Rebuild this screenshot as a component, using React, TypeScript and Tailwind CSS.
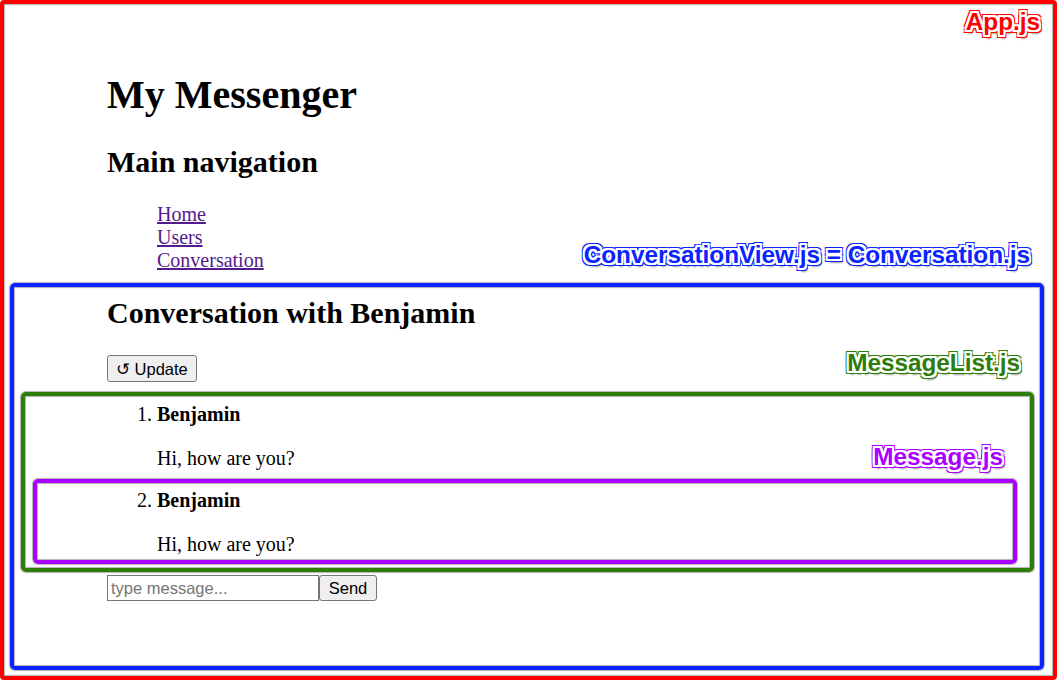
import React from "react";

const messages = [
  { id: 1, author: "Benjamin", text: "Hi, how are you?" },
  { id: 2, author: "Benjamin", text: "Hi, how are you?" },
];

export default function App() {
  return (
    <div className="relative w-[1057px] h-[680px] overflow-hidden bg-white text-black font-['Liberation_Serif',serif]">
      {/* the page itself */}
      <div className="flex flex-col items-start pl-[107px] pt-[72px]">
        <h1 className="text-[40px] leading-[46px] font-bold">My Messenger</h1>
        <h2 className="mt-[26px] text-[30px] leading-[35px] font-bold">Main navigation</h2>
        <ul className="mt-[24px] pl-[50px] text-[20px] leading-[23px]">
          <li><a href="#" className="text-[#551a8b] underline">Home</a></li>
          <li><a href="#" className="text-[#551a8b] underline">Users</a></li>
          <li><a href="#" className="text-[#551a8b] underline">Conversation</a></li>
        </ul>

        {/* ConversationView */}
        <h2 className="mt-[23px] text-[30px] leading-[35px] font-bold">Conversation with Benjamin</h2>
        <button className="mt-[25px] h-[27px] px-[8px] rounded-[3px] border border-[#767676] bg-[#efefef] font-['Liberation_Sans',Arial,sans-serif] text-[16.5px] leading-[20px]">
          ↺ Update
        </button>

        {/* MessageList */}
        <ol className="mt-[21px] pl-[50px] list-decimal text-[20px] leading-[23px]">
          {messages.map((m) => (
            <li key={m.id}>
              <strong className="font-bold">{m.author}</strong>
              <p className="mt-[21px] mb-[19px]">{m.text}</p>
            </li>
          ))}
        </ol>

        <form className="flex items-center" onSubmit={(e) => e.preventDefault()}>
          <input
            type="text"
            placeholder="type message..."
            className="w-[212px] h-[26px] px-[3px] border border-[#767676] font-['Liberation_Sans',Arial,sans-serif] text-[16.5px] placeholder:text-[#757575] outline-none"
          />
          <button className="w-[58px] h-[26px] rounded-[3px] border border-[#767676] bg-[#efefef] font-['Liberation_Sans',Arial,sans-serif] text-[16.5px] leading-[20px]">
            Send
          </button>
        </form>
      </div>

      {/* annotation frames */}
      <div className="pointer-events-none absolute inset-0 border-4 border-[#ff0000] rounded-[4px] shadow-[inset_0_0_1px_1px_rgba(0,0,0,0.3)]" />
      <div className="pointer-events-none absolute left-[10px] top-[283px] w-[1034px] h-[387px] border-4 border-[#0a24ff] rounded-[5px] shadow-[0_0_1px_1px_rgba(0,0,0,0.3),inset_0_0_1px_1px_rgba(0,0,0,0.3)]" />
      <div className="pointer-events-none absolute left-[21px] top-[392px] w-[1013px] h-[180px] border-4 border-[#2d7d0b] rounded-[5px] shadow-[0_0_1px_1px_rgba(0,0,0,0.3),inset_0_0_1px_1px_rgba(0,0,0,0.3)]" />
      <div className="pointer-events-none absolute left-[33px] top-[479px] w-[984px] h-[85px] border-4 border-[#aa00ff] rounded-[5px] shadow-[0_0_1px_1px_rgba(0,0,0,0.3),inset_0_0_1px_1px_rgba(0,0,0,0.3)]" />

      {/* annotation labels */}
      <span className="pointer-events-none absolute right-[17px] top-[8px] font-['Liberation_Sans',Arial,sans-serif] font-bold text-[24.3px] leading-[28px] text-[#ff0000] [text-shadow:2px_0_0_#fff,-2px_0_0_#fff,0_2px_0_#fff,0_-2px_0_#fff,2px_2px_0_#fff,-2px_-2px_0_#fff,2px_-2px_0_#fff,-2px_2px_0_#fff,3px_0_0_#ff0000,-3px_0_0_#ff0000,0_3px_0_#ff0000,0_-3px_0_#ff0000,3px_3px_0_#ff0000,-3px_-3px_0_#ff0000,3px_-3px_0_#ff0000,-3px_3px_0_#ff0000,2px_4px_2px_rgba(0,0,0,0.4)]">
        App.js
      </span>
      <span className="pointer-events-none absolute right-[27px] top-[241px] font-['Liberation_Sans',Arial,sans-serif] font-bold text-[24.3px] leading-[28px] text-[#0a24ff] [text-shadow:2px_0_0_#fff,-2px_0_0_#fff,0_2px_0_#fff,0_-2px_0_#fff,2px_2px_0_#fff,-2px_-2px_0_#fff,2px_-2px_0_#fff,-2px_2px_0_#fff,3px_0_0_#0a24ff,-3px_0_0_#0a24ff,0_3px_0_#0a24ff,0_-3px_0_#0a24ff,3px_3px_0_#0a24ff,-3px_-3px_0_#0a24ff,3px_-3px_0_#0a24ff,-3px_3px_0_#0a24ff,2px_4px_2px_rgba(0,0,0,0.4)]">
        ConversationView.js = Conversation.js
      </span>
      <span className="pointer-events-none absolute right-[37px] top-[349px] font-['Liberation_Sans',Arial,sans-serif] font-bold text-[24.3px] leading-[28px] text-[#2d7d0b] [text-shadow:2px_0_0_#fff,-2px_0_0_#fff,0_2px_0_#fff,0_-2px_0_#fff,2px_2px_0_#fff,-2px_-2px_0_#fff,2px_-2px_0_#fff,-2px_2px_0_#fff,3px_0_0_#2d7d0b,-3px_0_0_#2d7d0b,0_3px_0_#2d7d0b,0_-3px_0_#2d7d0b,3px_3px_0_#2d7d0b,-3px_-3px_0_#2d7d0b,3px_-3px_0_#2d7d0b,-3px_3px_0_#2d7d0b,2px_4px_2px_rgba(0,0,0,0.4)]">
        MessageList.js
      </span>
      <span className="pointer-events-none absolute right-[54px] top-[443px] font-['Liberation_Sans',Arial,sans-serif] font-bold text-[24.3px] leading-[28px] text-[#aa00ff] [text-shadow:2px_0_0_#fff,-2px_0_0_#fff,0_2px_0_#fff,0_-2px_0_#fff,2px_2px_0_#fff,-2px_-2px_0_#fff,2px_-2px_0_#fff,-2px_2px_0_#fff,3px_0_0_#aa00ff,-3px_0_0_#aa00ff,0_3px_0_#aa00ff,0_-3px_0_#aa00ff,3px_3px_0_#aa00ff,-3px_-3px_0_#aa00ff,3px_-3px_0_#aa00ff,-3px_3px_0_#aa00ff,2px_4px_2px_rgba(0,0,0,0.4)]">
        Message.js
      </span>
    </div>
  );
}
